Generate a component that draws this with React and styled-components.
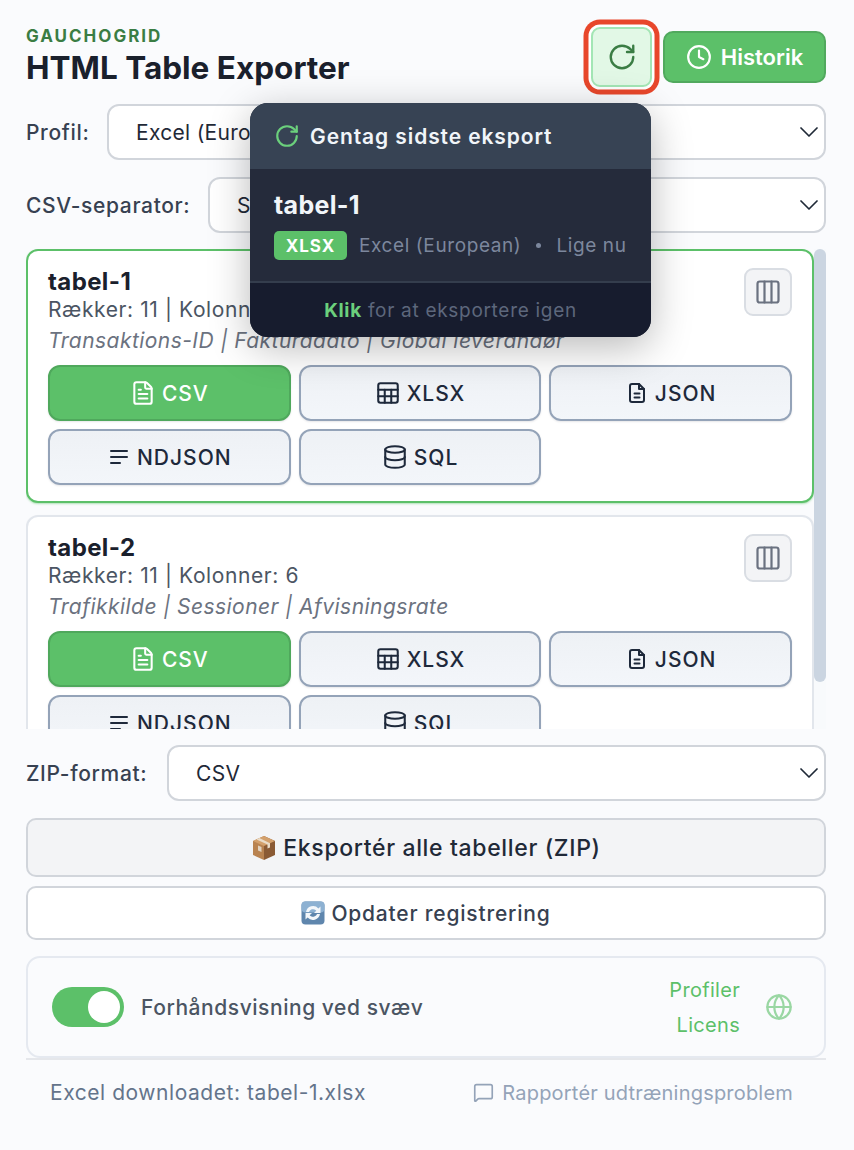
import React from 'react';
import styled, { createGlobalStyle } from 'styled-components';
import {
  Clock,
  Columns3,
  Database,
  FileText,
  Globe,
  MessageSquare,
  RotateCw,
  Sheet,
} from 'lucide-react';

const GlobalStyle = createGlobalStyle`
  html, body {
    margin: 0;
    padding: 0;
    background: #fafbfd;
  }
  * {
    box-sizing: border-box;
  }
  body {
    font-family: 'Inter', 'Liberation Sans', sans-serif;
  }
`;

const Page = styled.div`
  position: relative;
  width: 854px;
  height: 1150px;
  padding: 27px 28px 0 26px;
  overflow: hidden;
  display: flex;
  flex-direction: column;
`;

const Header = styled.header`
  display: flex;
  align-items: flex-start;
  justify-content: space-between;
  height: 60px;
  margin-bottom: 17px;
`;

const Brand = styled.div`
  display: flex;
  flex-direction: column;
`;

const Eyebrow = styled.div`
  font-size: 17px;
  line-height: 19px;
  font-weight: 700;
  letter-spacing: 2px;
  color: #3a7d44;
`;

const Title = styled.h1`
  margin: 1px 0 0;
  font-size: 31.5px;
  line-height: 42px;
  font-weight: 700;
  color: #1a202c;
`;

const HeaderActions = styled.div`
  display: flex;
  align-items: center;
  gap: 11px;
  height: 60px;
`;

const RepeatButton = styled.button`
  width: 61px;
  height: 60px;
  display: flex;
  align-items: center;
  justify-content: center;
  padding: 0;
  border: 2px solid #a3e6b5;
  border-radius: 9px;
  background: #e2f8e6;
  color: #3a7d44;
  box-shadow: 0 0 0 2.5px #fff, 0 0 0 7.5px #e8472b;
`;

const HistoryButton = styled.button`
  width: 163px;
  height: 52px;
  display: flex;
  align-items: center;
  justify-content: center;
  gap: 9px;
  padding: 0;
  border: 2px solid #51a95e;
  border-radius: 10px;
  background: #5cc069;
  color: #fff;
  font-family: inherit;
  font-size: 22px;
  font-weight: 600;
`;

const Row = styled.div`
  display: flex;
  align-items: center;
  gap: 18px;
  height: 56px;
  margin-bottom: ${({ $gap }) => $gap ?? 17}px;
`;

const RowLabel = styled.label`
  width: ${({ $width }) => $width}px;
  font-size: 21px;
  font-weight: 500;
  letter-spacing: 0.65px;
  color: #374151;
  white-space: nowrap;
`;

const SelectBox = styled.div`
  flex: 1;
  height: 56px;
  display: flex;
  align-items: center;
  justify-content: space-between;
  padding: 0 6px 0 27px;
  background: #fff;
  border: 2px solid #d1d5db;
  border-radius: 12px;
  font-size: 21px;
  letter-spacing: 0.3px;
  color: #1f2937;
`;

const ListFrame = styled.div`
  display: flex;
  height: 480px;
  margin-bottom: 16px;
  overflow: hidden;
`;

const List = styled.div`
  flex: 1;
  min-width: 0;
`;

const ScrollTrack = styled.div`
  width: 12px;
  background: #f8fafc;
`;

const ScrollThumb = styled.div`
  height: 433px;
  border-radius: 6px;
  background: #cbd5e1;
`;

const Card = styled.section`
  height: 254px;
  margin-bottom: 12px;
  padding: 17px 20px 15px;
  background: #fff;
  border: 2px solid ${({ $selected }) => ($selected ? '#5cc069' : '#e2e6ec')};
  border-radius: 12px;
  box-shadow: 0 1px 2px ${({ $selected }) => ($selected ? 'rgba(92, 192, 105, 0.45)' : 'rgba(15, 23, 42, 0.08)')};
`;

const CardTop = styled.div`
  display: flex;
  justify-content: space-between;
  align-items: flex-start;
  height: 85px;
  margin-bottom: 12px;
`;

const CardTitle = styled.div`
  font-size: 24px;
  line-height: 28px;
  font-weight: 700;
  letter-spacing: 0.4px;
  color: #1a202c;
`;

const CardMeta = styled.div`
  font-size: 21px;
  line-height: 27px;
  letter-spacing: 0.6px;
  color: #4b5563;
`;

const CardColumns = styled.div`
  margin-top: 5px;
  font-size: 21px;
  line-height: 26px;
  font-style: italic;
  letter-spacing: 0.45px;
  color: #6b7280;
`;

const ColumnsButton = styled.button`
  width: 48px;
  height: 48px;
  display: flex;
  align-items: center;
  justify-content: center;
  padding: 0;
  background: #f3f4f6;
  border: 2px solid #d9dde3;
  border-radius: 9px;
  color: #6b7280;
`;

const FormatGrid = styled.div`
  display: grid;
  grid-template-columns: repeat(3, 1fr);
  gap: 8px;
`;

const FormatButton = styled.button`
  height: 56px;
  display: flex;
  align-items: center;
  justify-content: center;
  gap: 6px;
  padding: 0;
  border: 2px solid ${({ $active }) => ($active ? '#4fa85c' : '#94a3b8')};
  border-radius: 12px;
  background: ${({ $active }) =>
    $active ? '#5cc069' : 'linear-gradient(180deg, #eef1f5, #f3f6fa)'};
  color: ${({ $active }) => ($active ? '#fff' : '#1e293b')};
  font-family: inherit;
  font-size: 21px;
  font-weight: 500;
  letter-spacing: 1px;
  box-shadow: 0 1px 2px rgba(15, 23, 42, 0.1);
`;

const WideButton = styled.button`
  width: 100%;
  height: ${({ $primary }) => ($primary ? 59 : 54)}px;
  margin-bottom: ${({ $primary }) => ($primary ? 9 : 16)}px;
  display: flex;
  align-items: center;
  justify-content: center;
  gap: 6px;
  padding: 0;
  border: 2px solid #d1d5db;
  border-radius: 10px;
  background: ${({ $primary }) => ($primary ? '#f3f4f6' : '#fff')};
  color: ${({ $primary }) => ($primary ? '#1f2937' : '#374151')};
  font-family: inherit;
  font-size: ${({ $primary }) => ($primary ? 23 : 21)}px;
  font-weight: 500;
  letter-spacing: ${({ $primary }) => ($primary ? 0.65 : 0.8)}px;
`;

const SettingsCard = styled.div`
  height: 102px;
  display: flex;
  align-items: center;
  justify-content: space-between;
  padding: 0 31px 0 24px;
  border: 2px solid #e5e9f0;
  border-radius: 14px;
`;

const ToggleGroup = styled.div`
  display: flex;
  align-items: center;
  gap: 17px;
`;

const Toggle = styled.div`
  width: 72px;
  height: 40px;
  display: flex;
  justify-content: flex-end;
  align-items: center;
  padding: 0 4px;
  border-radius: 20px;
  background: #5cc069;
`;

const ToggleKnob = styled.div`
  width: 32px;
  height: 32px;
  border-radius: 50%;
  background: #fff;
`;

const ToggleLabel = styled.span`
  font-size: 21px;
  font-weight: 500;
  letter-spacing: 0.55px;
  color: #4b5563;
`;

const SettingsLinks = styled.div`
  display: flex;
  align-items: center;
  gap: 25px;
`;

const LinkStack = styled.div`
  display: flex;
  flex-direction: column;
  align-items: flex-end;
  gap: 11px;
`;

const TextLink = styled.a`
  font-size: 20px;
  line-height: 24px;
  letter-spacing: 0.3px;
  color: #5cc069;
`;

const GlobeIcon = styled.span`
  display: flex;
  color: #5cc069;
  opacity: 0.6;
`;

const StatusBar = styled.div`
  height: 62px;
  display: flex;
  align-items: center;
  justify-content: space-between;
  padding: 5px 33px 0 24px;
  border-top: 2px solid #e5e7eb;
`;

const StatusText = styled.span`
  font-size: 21px;
  letter-spacing: 0.55px;
  color: #64748b;
`;

const ReportLink = styled.a`
  display: flex;
  align-items: center;
  gap: 8px;
  font-size: 20px;
  letter-spacing: 0.2px;
  color: #94a3b8;
`;

const Popover = styled.div`
  position: absolute;
  left: 250px;
  top: 103px;
  width: 401px;
  height: 234px;
  display: flex;
  flex-direction: column;
  border-radius: 18px;
  overflow: hidden;
  background: #252b3b;
  box-shadow: 0 10px 40px rgba(0, 0, 0, 0.28);
`;

const PopoverHead = styled.div`
  height: 66px;
  display: flex;
  align-items: center;
  gap: 10px;
  padding: 0 24px;
  background: #374354;
  color: #6bd07c;
`;

const PopoverTitle = styled.span`
  font-size: 21px;
  font-weight: 600;
  letter-spacing: 0.9px;
  color: #f1f5f9;
`;

const PopoverBody = styled.div`
  flex: 1;
  padding: 20px 24px 0;
`;

const PopoverName = styled.div`
  font-size: 25px;
  line-height: 32px;
  font-weight: 700;
  letter-spacing: 0.3px;
  color: #f1f5f9;
`;

const PopoverMeta = styled.div`
  display: flex;
  align-items: center;
  gap: 12px;
  margin-top: 10px;
  font-size: 19px;
  letter-spacing: 0.6px;
  color: #7c879d;
  white-space: nowrap;
`;

const MetaDot = styled.span`
  width: 5px;
  height: 5px;
  margin: 0 3px;
  border-radius: 50%;
  background: #7c879d;
`;

const Badge = styled.span`
  width: 73px;
  height: 29px;
  display: flex;
  align-items: center;
  justify-content: center;
  border-radius: 5px;
  background: #5cc069;
  color: #fff;
  font-size: 17px;
  font-weight: 700;
  letter-spacing: 1px;
`;

const PopoverFoot = styled.div`
  height: 56px;
  display: flex;
  align-items: center;
  justify-content: center;
  gap: 6px;
  border-top: 2px solid #343d4d;
  background: #171c2e;
  font-size: 19px;
  letter-spacing: 0.7px;
  color: #5d677c;
`;

const Strong = styled.strong`
  color: #6bd07c;
  font-weight: 700;
`;

const ChevronIcon = () => (
  <svg width="18" height="10" viewBox="0 0 18 10" fill="none" stroke="#1f2937" strokeWidth="1.7" strokeLinecap="round" strokeLinejoin="round">
    <path d="M1 1l8 8 8-8" />
  </svg>
);

const JsonIcon = ({ size = 24 }) => (
  <svg width={size} height={size} viewBox="0 0 24 24" fill="none" stroke="currentColor" strokeWidth="2" strokeLinecap="round" strokeLinejoin="round">
    <path d="M14 3H7a2 2 0 0 0-2 2v14a2 2 0 0 0 2 2h10a2 2 0 0 0 2-2V8z" />
    <path d="M14 3v5h5" />
    <path d="M9.5 12.5h5" />
    <path d="M9.5 16.5h5" />
  </svg>
);

const LinesIcon = ({ size = 24 }) => (
  <svg width={size} height={size} viewBox="0 0 24 24" fill="none" stroke="currentColor" strokeWidth="2" strokeLinecap="round">
    <path d="M4 6h16" />
    <path d="M4 12h16" />
    <path d="M4 18h9" />
  </svg>
);

const BoxEmoji = () => (
  <svg width="26" height="26" viewBox="0 0 26 26">
    <path d="M13 1l11 5v14l-11 5z" fill="#8a5a34" />
    <path d="M13 1L2 6v14l11 5z" fill="#b98350" />
    <path d="M2 6l11 5 11-5-11-5z" fill="#d3a06c" />
    <path d="M5.5 4.4L16.5 9.5v4L19 12.4V8.3L8.3 3.1z" fill="#eadcc8" />
    <path d="M7 10.5l3.5 1.6v5L7 15.5z" fill="#e6dccc" opacity="0.9" />
  </svg>
);

const RefreshEmoji = () => (
  <svg width="24" height="24" viewBox="0 0 24 24">
    <rect x="0.5" y="0.5" width="23" height="23" rx="4" fill="#5f86ad" />
    <rect x="0.5" y="0.5" width="23" height="11" rx="4" fill="#8db1d2" />
    <path d="M5 11a7.2 7.2 0 0 1 12.4-3.6L19.5 5.5V12h-6.5l2.3-2.3A4.3 4.3 0 0 0 8 11z" fill="#f4f7fa" />
    <path d="M19 13a7.2 7.2 0 0 1-12.4 3.6L4.5 18.5V12h6.500l-2.3 2.3A4.3 4.3 0 0 0 16 13z" fill="#f4f7fa" />
  </svg>
);

const formats = [
  { label: 'CSV', Icon: FileText, size: 26, active: true },
  { label: 'XLSX', Icon: Sheet, size: 26 },
  { label: 'JSON', Icon: JsonIcon, size: 24 },
  { label: 'NDJSON', Icon: LinesIcon, size: 24 },
  { label: 'SQL', Icon: Database, size: 26 },
];

const tables = [
  {
    name: 'tabel-1',
    meta: 'Rækker: 11 | Kolonner: 8',
    columns: 'Transaktions-ID | Fakturadato | Global leverandør',
    selected: true,
  },
  {
    name: 'tabel-2',
    meta: 'Rækker: 11 | Kolonner: 6',
    columns: 'Trafikkilde | Sessioner | Afvisningsrate',
  },
];

const Select = ({ value }) => (
  <SelectBox>
    <span>{value}</span>
    <ChevronIcon />
  </SelectBox>
);

const TableCard = ({ name, meta, columns, selected }) => (
  <Card $selected={selected}>
    <CardTop>
      <div>
        <CardTitle>{name}</CardTitle>
        <CardMeta>{meta}</CardMeta>
        <CardColumns>{columns}</CardColumns>
      </div>
      <ColumnsButton>
        <Columns3 size={28} strokeWidth={1.9} />
      </ColumnsButton>
    </CardTop>
    <FormatGrid>
      {formats.map(({ label, Icon, size, active }) => (
        <FormatButton key={label} $active={active}>
          <Icon size={size} strokeWidth={1.9} />
          {label}
        </FormatButton>
      ))}
    </FormatGrid>
  </Card>
);

export default function App() {
  return (
    <>
      <GlobalStyle />
      <Page>
        <Header>
          <Brand>
            <Eyebrow>GAUCHOGRID</Eyebrow>
            <Title>HTML Table Exporter</Title>
          </Brand>
          <HeaderActions>
            <RepeatButton aria-label="Gentag sidste eksport">
              <RotateCw size={30} strokeWidth={1.9} />
            </RepeatButton>
            <HistoryButton>
              <Clock size={26} strokeWidth={2} />
              Historik
            </HistoryButton>
          </HeaderActions>
        </Header>

        <Row>
          <RowLabel $width={63}>Profil:</RowLabel>
          <Select value="Excel (European)" />
        </Row>
        <Row $gap={16}>
          <RowLabel $width={164}>CSV-separator:</RowLabel>
          <Select value="Semikolon (;)" />
        </Row>

        <ListFrame>
          <List>
            {tables.map((table) => (
              <TableCard key={table.name} {...table} />
            ))}
          </List>
          <ScrollTrack>
            <ScrollThumb />
          </ScrollTrack>
        </ListFrame>

        <Row>
          <RowLabel $width={123}>ZIP-format:</RowLabel>
          <Select value="CSV" />
        </Row>

        <WideButton $primary>
          <BoxEmoji />
          Eksportér alle tabeller (ZIP)
        </WideButton>
        <WideButton>
          <RefreshEmoji />
          Opdater registrering
        </WideButton>

        <SettingsCard>
          <ToggleGroup>
            <Toggle>
              <ToggleKnob />
            </Toggle>
            <ToggleLabel>Forhåndsvisning ved svæv</ToggleLabel>
          </ToggleGroup>
          <SettingsLinks>
            <LinkStack>
              <TextLink>Profiler</TextLink>
              <TextLink>Licens</TextLink>
            </LinkStack>
            <GlobeIcon>
              <Globe size={28} strokeWidth={1.9} />
            </GlobeIcon>
          </SettingsLinks>
        </SettingsCard>

        <StatusBar>
          <StatusText>Excel downloadet: tabel-1.xlsx</StatusText>
          <ReportLink>
            <MessageSquare size={21} strokeWidth={1.9} />
            Rapportér udtræningsproblem
          </ReportLink>
        </StatusBar>

        <Popover>
          <PopoverHead>
            <RotateCw size={26} strokeWidth={2} />
            <PopoverTitle>Gentag sidste eksport</PopoverTitle>
          </PopoverHead>
          <PopoverBody>
            <PopoverName>tabel-1</PopoverName>
            <PopoverMeta>
              <Badge>XLSX</Badge>
              <span>Excel (European)</span>
              <MetaDot />
              <span>Lige nu</span>
            </PopoverMeta>
          </PopoverBody>
          <PopoverFoot>
            <Strong>Klik</Strong> for at eksportere igen
          </PopoverFoot>
        </Popover>
      </Page>
    </>
  );
}
